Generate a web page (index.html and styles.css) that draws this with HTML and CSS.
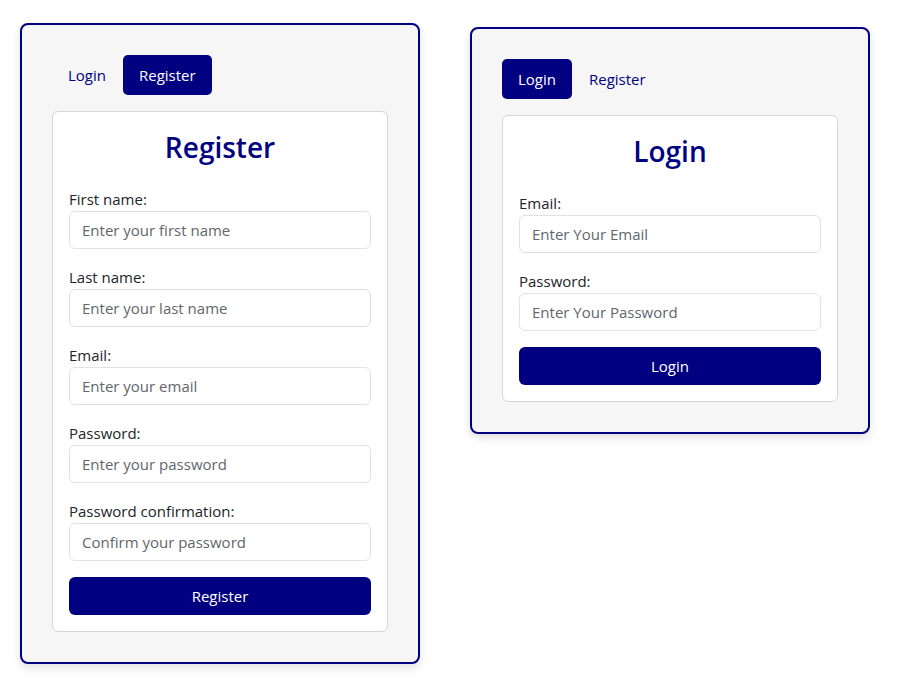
FILE: index.html
```html
<!DOCTYPE html>
<html lang="en">
<head>
<meta charset="utf-8">
<title>Auth</title>
<link rel="stylesheet" href="styles.css">
</head>
<body>
<div class="page">
  <div class="card">
    <div class="tabs">
      <button class="tab">Login</button>
      <button class="tab active">Register</button>
    </div>
    <form class="panel">
      <h3 class="title">Register</h3>
      <div class="field">
        <label>First name:</label>
        <input type="text" placeholder="Enter your first name">
      </div>
      <div class="field">
        <label>Last name:</label>
        <input type="text" placeholder="Enter your last name">
      </div>
      <div class="field">
        <label>Email:</label>
        <input type="email" placeholder="Enter your email">
      </div>
      <div class="field">
        <label>Password:</label>
        <input type="password" placeholder="Enter your password">
      </div>
      <div class="field">
        <label>Password confirmation:</label>
        <input type="password" placeholder="Confirm your password">
      </div>
      <button type="button" class="submit">Register</button>
    </form>
  </div>
  <div class="card card-login">
    <div class="tabs">
      <button class="tab active">Login</button>
      <button class="tab">Register</button>
    </div>
    <form class="panel">
      <h3 class="title">Login</h3>
      <div class="field">
        <label>Email:</label>
        <input type="email" placeholder="Enter Your Email">
      </div>
      <div class="field">
        <label>Password:</label>
        <input type="password" placeholder="Enter Your Password">
      </div>
      <button type="button" class="submit">Login</button>
    </form>
  </div>
</div>
</body>
</html>
```

FILE: styles.css
```css
* { box-sizing: border-box; }
html, body { margin: 0; padding: 0; background: #fff; }
body {
  font-family: "Open Sans", "Noto Sans", "Liberation Sans", sans-serif;
  font-size: 15px;
  line-height: 24px;
  color: #212529;
}
.page {
  display: flex;
  align-items: flex-start;
  gap: 50px;
  padding: 23px 20px;
}
.card {
  width: 400px;
  background: #f6f6f6;
  border: 2px solid #000080;
  border-radius: 8px;
  padding: 30px;
  box-shadow: 0 4px 10px rgba(0, 0, 0, 0.12);
}
.card-login { margin-top: 4px; }
.tabs {
  display: flex;
  gap: 1px;
  margin-bottom: 16px;
}
.tab {
  font: inherit;
  height: 40px;
  padding: 0 16px;
  border: 0;
  border-radius: 5px;
  background: transparent;
  color: #000080;
}
.tab.active { background: #000080; color: #fff; min-width: 70px; }
.panel {
  background: #fff;
  border: 1px solid #d6d6d6;
  border-radius: 6px;
  padding: 16px;
}
.title {
  margin: 2px 0 23px;
  text-align: center;
  color: #000080;
  font-size: 28px;
  line-height: 34px;
  font-weight: 600;
}
.field { margin-bottom: 16px; }
.field label { display: block; }
.field input {
  display: block;
  width: 100%;
  height: 38px;
  padding: 6px 12px;
  font: inherit;
  color: #212529;
  background: #fff;
  border: 1px solid #dee2e6;
  border-radius: 6px;
  outline: none;
}
.field input::placeholder { color: #62666b; }
.submit {
  display: block;
  width: 100%;
  height: 38px;
  font: inherit;
  color: #fff;
  background: #000080;
  border: 0;
  border-radius: 6px;
}
```
